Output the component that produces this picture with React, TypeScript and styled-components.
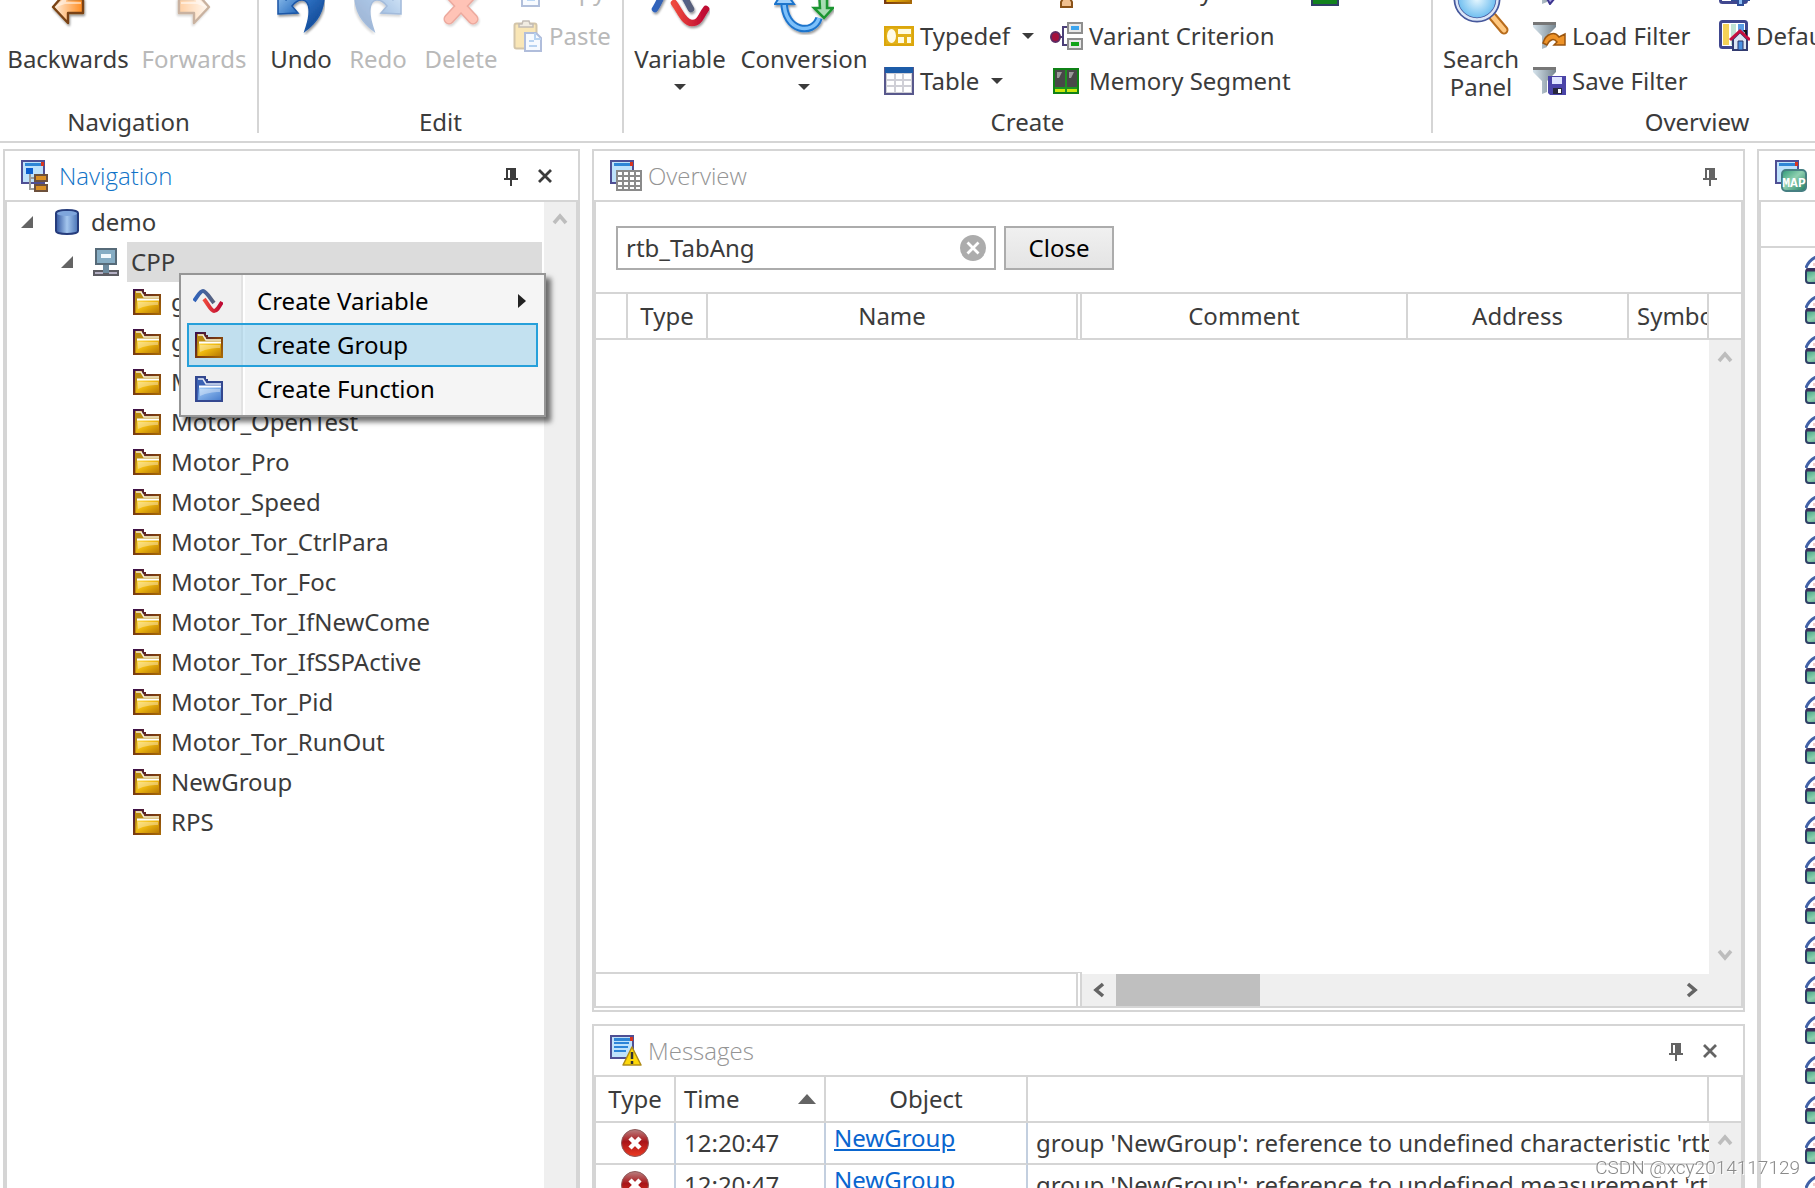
import React from "react";
import styled, { createGlobalStyle, css } from "styled-components";

const line = "#d5d5d5";
const ink = "#3b3b3b";

const GlobalStyle = createGlobalStyle`
  * { box-sizing: border-box; }
  html, body { margin: 0; height: 100%; overflow: hidden; background: #fff; }
  body, button, input, table {
    font-family: "Noto Sans", "Open Sans", sans-serif;
    font-size: 24px;
    line-height: 28px;
    color: ${ink};
  }
  button { border: 0; padding: 0; background: none; cursor: pointer; }
  svg { display: block; flex: none; }
`;

const Screen = styled.div`
  height: 100vh;
  display: flex;
  flex-direction: column;
  overflow: hidden;
`;

/* ---------- ribbon ---------- */

const Ribbon = styled.header`
  flex: none;
  height: 143px;
  display: flex;
  align-items: flex-start;
  overflow: hidden;
  border-bottom: 2px solid ${line};
`;

const Group = styled.section<{ $width: number }>`
  flex: none;
  width: ${(p) => p.$width}px;
  height: 133px;
  display: flex;
  flex-direction: column;
  justify-content: flex-end;
  border-right: 2px solid ${line};
`;

const Actions = styled.div`
  display: flex;
  align-items: flex-end;
  padding-left: 4px;
  margin-bottom: 8px;
`;

const GroupLabel = styled.h2`
  margin: 0;
  font-size: 24px;
  font-weight: 400;
  line-height: 22px;
  text-align: center;
`;

const BigButton = styled.button<{ $width: number }>`
  width: ${(p) => p.$width}px;
  height: 116px;
  display: flex;
  flex-direction: column;
  align-items: center;
  gap: 10px;
  flex: none;
  white-space: nowrap;
  &:disabled { color: #b9b9b9; cursor: default; }
  &:disabled svg { opacity: 0.4; }
`;

const BigText = styled.span`
  display: flex;
  flex-direction: column;
  align-items: center;
  gap: 11px;
`;

const Stack = styled.div<{ $width: number; $spaced?: boolean }>`
  width: ${(p) => p.$width}px;
  padding-left: ${(p) => (p.$spaced ? 8 : 0)}px;
  flex: none;
  display: flex;
  flex-direction: column;
  align-self: flex-end;
`;

const SmallButton = styled.button`
  height: 45px;
  display: flex;
  align-items: center;
  gap: 6px;
  white-space: nowrap;
  &:disabled { color: #b9b9b9; cursor: default; }
  &:disabled svg { opacity: 0.4; }
`;

const Blank = styled.div`
  height: 45px;
`;

const Caret = styled.span`
  width: 0;
  height: 0;
  margin-left: 6px;
  border: 6px solid transparent;
  border-top-color: currentColor;
  border-bottom: 0;
`;

const CenterCaret = styled(Caret)`
  margin-left: 0;
`;

/* ---------- panels ---------- */

const Workspace = styled.main`
  flex: 1;
  min-height: 0;
  display: grid;
  grid-template-columns: 577px minmax(0, 1fr) 58px;
  column-gap: 12px;
  padding: 6px 0 0 3px;
`;

const Middle = styled.div`
  min-height: 0;
  display: flex;
  flex-direction: column;
  gap: 12px;
`;

const Panel = styled.section<{ $closed?: boolean; $height?: number; $bleed?: boolean }>`
  flex: ${(p) => (p.$height ? `0 0 ${p.$height}px` : "1 1 0")};
  min-width: 0;
  min-height: 0;
  display: flex;
  flex-direction: column;
  border: 2px solid ${line};
  ${(p) => p.$closed ? css`padding-bottom: 2px;` : css`border-bottom: 0;`}
  ${(p) => p.$bleed && css`border-right: 0;`}
`;

const PanelHead = styled.header`
  flex: none;
  height: 49px;
  display: flex;
  align-items: center;
  gap: 6px;
  padding: 0 26px 0 16px;
`;

const PanelTitle = styled.h2<{ $active?: boolean }>`
  flex: 1;
  margin: 0;
  font-family: "Open Sans", "Noto Sans", sans-serif;
  font-size: 24px;
  font-weight: 300;
  color: ${(p) => (p.$active ? "#1173c7" : "#949494")};
`;

const Tools = styled.div<{ $active?: boolean }>`
  display: flex;
  gap: 20px;
  padding-top: 2px;
  button { color: ${(p) => (p.$active ? ink : "#646464")}; }
`;

const PanelBody = styled.div<{ $closed?: boolean; $bleed?: boolean }>`
  flex: 1;
  min-height: 0;
  display: flex;
  flex-direction: column;
  overflow: hidden;
  border: 2px solid ${line};
  ${(p) => !p.$closed && css`border-bottom: 0;`}
  ${(p) => p.$bleed && css`border-right: 0;`}
`;

const Split = styled.div`
  flex: 1;
  min-height: 0;
  display: flex;
`;

const ScrollTrack = styled.div<{ $corner?: boolean }>`
  flex: none;
  width: 32px;
  display: flex;
  flex-direction: column;
  align-items: center;
  justify-content: space-between;
  padding: 9px 0 ${(p) => (p.$corner ? 43 : 0)}px;
  background: #efefef;
  color: #bdbdbd;
`;

/* ---------- tree ---------- */

const TreeArea = styled.div`
  position: relative;
  flex: 1;
  min-width: 0;
`;

const Tree = styled.ul`
  margin: 0;
  padding: 0 2px 0 0;
  list-style: none;
`;

const TreeRow = styled.li<{ $level: number }>`
  height: 40px;
  display: flex;
  align-items: center;
  padding-left: ${(p) => 14 + p.$level * 40}px;
`;

const Twisty = styled.span`
  width: 32px;
  flex: none;
  color: #646464;
`;

const TreeIcon = styled.span`
  width: 34px;
  flex: none;
`;

const TreeLabel = styled.span<{ $selected?: boolean }>`
  flex: 1;
  height: 40px;
  padding-left: 4px;
  line-height: 40px;
  background: ${(p) => (p.$selected ? "#dcdcdc" : "transparent")};
`;

const Menu = styled.div`
  position: absolute;
  top: 71px;
  left: 172px;
  width: 367px;
  z-index: 2;
  padding: 4px 6px;
  border: 2px solid #969696;
  background: linear-gradient(90deg, #f0f0f0 60px, #e2e2e2 60px, #e2e2e2 62px, #fff 62px, #fff 64px, #f5f5f5 64px);
  box-shadow: 5px 5px 5px rgba(0, 0, 0, 0.55);
`;

const MenuItem = styled.button<{ $hot?: boolean }>`
  width: 100%;
  height: 44px;
  display: flex;
  align-items: center;
  padding: 0 10px 0 4px;
  border: 2px solid ${(p) => (p.$hot ? "#26a0da" : "transparent")};
  background: ${(p) => (p.$hot ? "rgba(150, 208, 235, 0.52)" : "transparent")};
  color: #000;
  text-align: left;
`;

const MenuIcon = styled.span`
  width: 30px;
  margin-right: 34px;
  flex: none;
  display: flex;
  justify-content: flex-end;
`;

const MenuText = styled.span`
  flex: 1;
`;

/* ---------- overview ---------- */

const SearchBar = styled.form`
  flex: none;
  height: 90px;
  display: flex;
  align-items: center;
  gap: 8px;
  padding: 2px 20px 0;
`;

const SearchField = styled.label`
  width: 380px;
  height: 44px;
  display: flex;
  align-items: center;
  padding: 0 8px;
  border: 2px solid #acacac;
`;

const SearchInput = styled.input`
  flex: 1;
  min-width: 0;
  height: 34px;
  padding: 0 0 2px;
  border: 0;
  outline: 0;
  background: none;
`;

const CloseButton = styled.button`
  width: 110px;
  height: 44px;
  border: 2px solid #acacac;
  background: linear-gradient(#f0f0f0, #e4e4e4);
  color: #000;
`;

const Grid = styled.table<{ $ruled?: boolean }>`
  width: 100%;
  flex: none;
  table-layout: fixed;
  border-collapse: separate;
  border-spacing: 0;
  border-top: ${(p) => (p.$ruled ? `2px solid ${line}` : "0")};
`;

const BodyGrid = styled(Grid)`
  flex: 1;
  min-width: 0;
  align-self: flex-start;
`;

const Col = styled.col<{ $width?: number }>`
  width: ${(p) => (p.$width ? `${p.$width}px` : "auto")};
`;

const Th = styled.th<{ $align?: string; $double?: boolean }>`
  height: 46px;
  padding: 0 8px;
  overflow: hidden;
  white-space: nowrap;
  font-weight: 400;
  text-align: ${(p) => p.$align || "center"};
  border-right: 2px solid ${line};
  border-bottom: 2px solid ${line};
  ${(p) => p.$double && css`border-right: 6px double ${line};`}
  &:last-child { border-right: 0; }
`;

const SortHead = styled.span`
  display: flex;
  align-items: center;
  justify-content: space-between;
`;

const SortMark = styled.span`
  border: 9px solid transparent;
  border-top: 0;
  border-bottom: 10px solid #646464;
`;

const OverviewMain = styled.div`
  flex: 1;
  min-width: 0;
  display: flex;
  flex-direction: column;
  justify-content: flex-end;
`;

const BottomBar = styled.div`
  display: flex;
  height: 34px;
`;

const FrozenFoot = styled.div`
  width: 486px;
  flex: none;
  border-top: 2px solid ${line};
  border-right: 6px double ${line};
`;

const HScroll = styled.div`
  flex: 1;
  margin-top: 2px;
  display: flex;
  align-items: center;
  background: #efefef;
  color: #646464;
`;

const HScrollEnd = styled.span`
  width: 34px;
  display: flex;
  justify-content: center;
`;

const Thumb = styled.span`
  width: 144px;
  height: 32px;
  margin-right: auto;
  background: #bfbfbf;
`;

/* ---------- messages ---------- */

const Td = styled.td<{ $top?: boolean }>`
  height: 42px;
  padding: ${(p) => (p.$top ? "0 8px 10px" : "0 8px")};
  overflow: hidden;
  white-space: nowrap;
  border-right: 2px solid #c3cfdf;
  border-bottom: 2px solid ${line};
  &:last-child { border-right: 0; }
`;

const Centered = styled.span`
  display: flex;
  justify-content: center;
`;

const ObjectLink = styled.a`
  color: #0a66cf;
  text-decoration-thickness: 2px;
  text-underline-offset: 2px;
`;

/* ---------- map list ---------- */

const MapHead = styled.div`
  flex: none;
  height: 46px;
  border-bottom: 2px solid ${line};
`;

const MapList = styled.ul`
  margin: 0;
  padding: 2px 0 0 44px;
  list-style: none;
`;

const MapRow = styled.li`
  height: 40px;
  display: flex;
  align-items: center;
`;

const Watermark = styled.div`
  position: fixed;
  right: 15px;
  bottom: 6px;
  z-index: 3;
  font-family: Roboto, sans-serif;
  font-weight: 300;
  font-size: 19px;
  line-height: 28px;
  color: #8a8a8a;
  text-shadow: 1px 1px 0 #fff;
`;

/* ---------- drawings ---------- */

const DefsSvg = styled.svg`
  position: absolute;
`;

const Defs = () => (
  <DefsSvg width="0" height="0" aria-hidden="true">
    <defs>
      <linearGradient id="gold" x1="0" y1="0" x2="1" y2="1"><stop offset="0" stopColor="#ffdc55" /><stop offset=".45" stopColor="#efb90f" /><stop offset="1" stopColor="#b87a05" /></linearGradient>
      <linearGradient id="goldEdge" x1="0" y1="0" x2="1" y2="1"><stop offset="0" stopColor="#3b0f4a" /><stop offset=".5" stopColor="#7a3b10" /><stop offset="1" stopColor="#a86a08" /></linearGradient>
      <linearGradient id="azure" x1="0" y1="0" x2="1" y2="1"><stop offset="0" stopColor="#a9d2fb" /><stop offset="1" stopColor="#4a7fce" /></linearGradient>
      <linearGradient id="orange" x1="0" y1="0" x2="1" y2="0"><stop offset="0" stopColor="#fff1e2" /><stop offset="1" stopColor="#ff8a1c" /></linearGradient>
      <linearGradient id="undo" x1="0" y1="0" x2="1" y2="1"><stop offset="0" stopColor="#a8d4f8" /><stop offset=".5" stopColor="#2c6fc0" /><stop offset="1" stopColor="#083a86" /></linearGradient>
      <linearGradient id="cyl" x1="0" y1="0" x2="1" y2="0"><stop offset="0" stopColor="#2f549f" /><stop offset=".5" stopColor="#a4c6ee" /><stop offset="1" stopColor="#4973b6" /></linearGradient>
      <linearGradient id="steel" x1="0" y1="0" x2="1" y2="0"><stop offset="0" stopColor="#d5e3ec" /><stop offset="1" stopColor="#76858f" /></linearGradient>
      <linearGradient id="blueWave" x1="0" y1="0" x2="1" y2="0"><stop offset="0" stopColor="#2f63bd" /><stop offset="1" stopColor="#59617c" /></linearGradient>
      <linearGradient id="redWave" x1="0" y1="0" x2="1" y2="0"><stop offset="0" stopColor="#ee4a3c" /><stop offset="1" stopColor="#bd0733" /></linearGradient>
      <linearGradient id="err" x1="0" y1="0" x2="0" y2="1"><stop offset="0" stopColor="#b98080" /><stop offset=".45" stopColor="#a91418" /><stop offset="1" stopColor="#ec3a22" /></linearGradient>
      <radialGradient id="lens"><stop offset="0" stopColor="#e8f8ff" /><stop offset="1" stopColor="#62b8ee" /></radialGradient>
      <linearGradient id="green" x1="0" y1="0" x2="1" y2="1"><stop offset="0" stopColor="#2f9a78" /><stop offset=".45" stopColor="#8fd0b0" /><stop offset="1" stopColor="#1f7a60" /></linearGradient>
      <filter id="drop" x="-20%" y="-20%" width="150%" height="150%"><feDropShadow dx="1" dy="2" stdDeviation="1.2" floodOpacity=".4" /></filter>
    </defs>
  </DefsSvg>
);

const ArrowIcon = ({ flip }: { flip?: boolean }) => (
  <svg width="48" height="48" viewBox="0 0 48 48">
    <g transform={flip ? "matrix(-1 0 0 1 48 0)" : undefined} filter="url(#drop)">
      <path d="M9 20 24 3v9h15v14H24v10z" fill="url(#orange)" stroke="#7a4312" strokeWidth="2.4" strokeLinejoin="round" />
      <path d="M12 20 22 9v6h15v2H21z" fill="#fff" opacity=".5" />
    </g>
  </svg>
);

const UndoIcon = ({ flip }: { flip?: boolean }) => (
  <svg width="48" height="48" viewBox="0 0 48 48">
    <g transform={flip ? "matrix(-1 0 0 1 48 0)" : undefined} filter="url(#drop)">
      <path d="M1 7v20l20-1-6-7c7-9 16-8 17 3 1 9-2 15-4 22C39 36 47 24 47 9 44-6 22-8 9 13z" fill="url(#undo)" stroke="#1a56a6" strokeWidth="1.5" />
    </g>
  </svg>
);

const DeleteIcon = () => (
  <svg width="48" height="48" viewBox="0 0 48 48">
    <path d="M10 4 36 32M38 4 12 32" stroke="#d02a10" strokeWidth="11" strokeLinecap="round" filter="url(#drop)" />
    <path d="M10 4 36 32M38 4 12 32" stroke="#ff6a4a" strokeWidth="8" strokeLinecap="round" />
  </svg>
);

const WaveIcon = () => (
  <svg width="30" height="26" viewBox="0 0 30 26" fill="none" strokeWidth="4">
    <path d="M1 13C5 8 7 3 10 3S17 10 21 15" stroke="url(#blueWave)" />
    <path d="M11 11C15 16 18 23 21 23S26 19 29 14" stroke="url(#redWave)" />
  </svg>
);

const BigWaveIcon = () => (
  <svg width="60" height="48" viewBox="0 0 60 48" fill="none" strokeWidth="6.500" strokeLinecap="round">
    <g filter="url(#drop)">
      <path d="M5 22C12 12 14-2 22-2S34 10 41 22" stroke="url(#blueWave)" />
      <path d="M24 16C30 24 34 36 42 36S50 30 56 22" stroke="url(#redWave)" />
    </g>
  </svg>
);

const ConvertIcon = () => (
  <svg width="60" height="48" viewBox="0 0 60 48" fill="none">
    <g filter="url(#drop)">
      <path d="M10 14C10 46 40 48 45 31" stroke="#1f74cc" strokeWidth="7.500" />
      <path d="M10 14C10 46 40 48 45 31" stroke="#7cc0fa" strokeWidth="3.500" />
      <path d="M1 17 10 3l10 14z" fill="#9fd0fb" stroke="#1f74cc" strokeWidth="2" />
      <path d="M45 4h8v17h6L50 31 40 21h6z" fill="#a8dcb4" stroke="#1f9632" strokeWidth="2.500" />
    </g>
  </svg>
);

const SearchIcon = () => (
  <svg width="58" height="48" viewBox="0 0 58 48">
    <path d="m41 30 11 13" stroke="#b86c1c" strokeWidth="9" strokeLinecap="round" />
    <path d="m41 30 11 13" stroke="#ffc880" strokeWidth="5" strokeLinecap="round" />
    <circle cx="25" cy="12" r="21" fill="url(#lens)" stroke="#46589c" strokeWidth="5" />
    <circle cx="25" cy="12" r="20.500" fill="none" stroke="#dbe6f8" strokeWidth="2.500" />
  </svg>
);

const CopyIcon = () => (
  <svg width="30" height="34" viewBox="0 0 30 34">
    <path d="M3 1h14v20H3z" fill="#e4eefb" stroke="#3f62a8" strokeWidth="2" />
    <path d="M9 11h12l5 5v16H9z" fill="#eef6ff" stroke="#3f62a8" strokeWidth="2" />
    <path d="M14 20h8M14 26h8" stroke="#5aa0e8" strokeWidth="2" />
  </svg>
);

const PasteIcon = () => (
  <svg width="30" height="32" viewBox="0 0 30 32">
    <rect x="1.500" y="3.500" width="22" height="25" rx="2" fill="#f2c24a" stroke="#93702a" strokeWidth="2" />
    <path d="M6 7V4h3l1-3h6l1 3h3v3z" fill="#ddd0b8" stroke="#6b5a4a" strokeWidth="1.500" />
    <path d="M12 13h11l5 5v13H12z" fill="#eaf4ff" stroke="#3d5ba6" strokeWidth="2" />
    <path d="M22 13v6h6M16 21h5M16 26h8" fill="none" stroke="#4f93dd" strokeWidth="2" />
  </svg>
);

const FolderIcon = ({ blue }: { blue?: boolean }) => (
  <svg width="28" height="26" viewBox="0 0 28 26">
    <path d="M1 25V1h9v3h2v2h15v19z" fill={blue ? "#3a62b4" : "#b98a10"} stroke={blue ? "#33478f" : "url(#goldEdge)"} strokeWidth="2" />
    <path d="M3 3h5l3 5h15" fill="none" stroke="#fff" strokeWidth="1.500" opacity=".85" />
    <path d="M4 11h22v13H3z" fill={blue ? "url(#azure)" : "url(#gold)"} />
    <path d="M4 10.500h22" stroke="#fff" strokeWidth="2" />
    <path d="M5 13h20v3C17 16 12 17 5 20z" fill="#fff" opacity=".35" />
  </svg>
);

const TypedefIcon = () => (
  <svg width="30" height="22" viewBox="0 0 30 22">
    <rect x="1" y="2" width="28" height="18" fill="#e2b118" stroke="#dba60c" strokeWidth="2" />
    <ellipse cx="7.500" cy="11" rx="4.500" ry="7" fill="#fffbe6" />
    <path d="M14 4h13v5H14zM14 12h6v6h-6zM23 12h4v6h-4z" fill="#fffbe0" />
  </svg>
);

const TableIcon = () => (
  <svg width="30" height="28" viewBox="0 0 30 28">
    <rect x="1" y="1" width="28" height="26" fill="#cfcfd6" stroke="#58588c" strokeWidth="2" />
    <path d="M1 0h28v6H1z" fill="#1c5ca8" />
    <path d="M3 7h7v5H3zM12 7h6v5h-6zM20 7h7v5h-7zM3 14h7v4H3zM12 14h6v4h-6zM20 14h7v4h-7zM3 20h7v5H3zM12 20h6v5h-6zM20 20h7v5h-7z" fill="#fff" />
  </svg>
);

const VariantIcon = () => (
  <svg width="33" height="28" viewBox="0 0 33 28">
    <path d="M10 15h3M17 5h-4v18h4" fill="none" stroke="#4b3f78" strokeWidth="2" />
    <ellipse cx="5.500" cy="15" rx="4.500" ry="5" fill="#a40f3c" stroke="#5d2a62" strokeWidth="2" />
    <rect x="18" y="1" width="14" height="10" fill="#e8e8e8" stroke="#8e8e8e" strokeWidth="2" />
    <rect x="21" y="4" width="8" height="4" fill="#3ca4ee" />
    <rect x="18" y="17" width="14" height="10" fill="#e8e8e8" stroke="#8e8e8e" strokeWidth="2" />
    <rect x="21" y="20" width="8" height="4" fill="#11a318" />
  </svg>
);

const MemoryIcon = () => (
  <svg width="33" height="26" viewBox="0 0 33 26">
    <path d="M4 1h24v24H4z" fill="#1d9420" stroke="#0f8216" strokeWidth="2" />
    <path d="M5 2h10v17H5zM17 2h10v17H17z" fill="#484848" />
    <path d="M7 4h5l-3 6H7zM19 4h5l-3 6h-2z" fill="#999" />
    <path d="M5 21h10v3H5zM17 21h10v3H17z" fill="#c8e60c" />
  </svg>
);

const FrameIcon = () => (
  <svg width="28" height="30" viewBox="0 0 28 30">
    <path d="M1 1h26v28H1z" fill="#12821e" stroke="#2f3f66" strokeWidth="2" />
  </svg>
);

const LayoutIcon = () => (
  <svg width="33" height="34" viewBox="0 0 33 34">
    <path d="M12 2h9v10l-3 9 4 7v5H11v-5l4-7-3-9z" fill="#f0c090" stroke="#8a5218" strokeWidth="2" />
  </svg>
);

const FunnelIcon = ({ kind }: { kind: "edit" | "load" | "save" }) => (
  <svg width="33" height="28" viewBox="0 0 33 28">
    <path d="M0 1h23v4l-9 9v11l-5 2V14L0 5z" fill="url(#steel)" />
    <path d="M0 0h23v3H0z" fill="#777" />
    {kind === "load" && <path d="M10 21c3-10 12-12 16-6l6-3v11H21l3-3c-3-4-7-3-10 3z" fill="#ee9328" stroke="#9b5610" strokeWidth="1.500" />}
    {kind === "save" && (
      <>
        <path d="M15 9h18v19H17l-2-2z" fill="#4a44a8" />
        <path d="M19 10h10v7H19z" fill="#dfe4ff" />
        <path d="M20 21h9v6h-9z" fill="#26263c" />
        <path d="M25 22h3v4h-3z" fill="#fff" />
      </>
    )}
    {kind === "edit" && <path d="m13 20 8-9 5 5-9 11z" fill="#a8a0e8" stroke="#3d3690" strokeWidth="2" />}
  </svg>
);

const ColumnsIcon = ({ home }: { home?: boolean }) => (
  <svg width="31" height="31" viewBox="0 0 31 31">
    <rect x="1.500" y="1.500" width="26" height="26" rx="2" fill="#fff" stroke="#40478f" strokeWidth="3" />
    <path d="M4 4h6v21H4z" fill="#f4d258" /><path d="M12 4h5v21h-5z" fill="#c0e2d4" /><path d="M19 4h6v21h-6z" fill="#5a9ce4" />
    {home ? (
      <>
        <path d="M14 19 21 12l7 7v11H14z" fill="#dce6f4" stroke="#333c70" strokeWidth="2" />
        <path d="m11 20 10-9 10 9" fill="none" stroke="#c80f3f" strokeWidth="3" />
        <path d="M19 21h5v9h-5z" fill="#4a90e0" stroke="#2c3568" />
        <path d="M24 10h4v6z" fill="#111" />
      </>
    ) : (
      <path d="M13 20h6v-6h5v6h6v5h-6v5h-5v-5h-6z" fill="#8cc0f4" stroke="#2f4d96" strokeWidth="2" />
    )}
  </svg>
);

const WindowBase = () => (
  <>
    <rect x="1" y="1" width="22" height="22" fill="#bfe2fb" stroke="#4f4f94" strokeWidth="2" />
    <path d="M4 3h16v3H4z" fill="#2f86d6" />
    <path d="M20 2h3v4h-3z" fill="#d8351f" />
  </>
);

const NavPanelIcon = () => (
  <svg width="32" height="32" viewBox="0 0 32 32">
    <WindowBase />
    <path d="M5 8h7v6H5z" fill="#0c5fd0" />
    <path d="M9 14v15h6M9 18h6" fill="none" stroke="#9b9b9b" strokeWidth="2" />
    <rect x="14" y="15" width="12" height="6" fill="#d98f24" stroke="#6d503c" strokeWidth="2" />
    <rect x="14" y="25" width="12" height="6" fill="#d98f24" stroke="#6d503c" strokeWidth="2" />
  </svg>
);

const OverviewPanelIcon = () => (
  <svg width="32" height="32" viewBox="0 0 32 32">
    <WindowBase />
    <path d="M7 11h24v19H7z" fill="#fff" stroke="#8a8a8a" strokeWidth="2" />
    <path d="M13 11v19M19 11v19M25 11v19M7 16h24M7 21h24M7 26h24" stroke="#8a8a8a" strokeWidth="2" />
  </svg>
);

const MessagesPanelIcon = () => (
  <svg width="32" height="32" viewBox="0 0 32 32">
    <WindowBase />
    <path d="M4 8h15M4 12h14M4 16h12" stroke="#2c84d8" strokeWidth="2" />
    <path d="m22 12 9 18H13z" fill="#fdd80a" stroke="#b08c18" strokeWidth="1.500" strokeLinejoin="round" />
    <path d="M22 17v7M22 26v3" stroke="#333" strokeWidth="2.500" />
  </svg>
);

const MapPanelIcon = () => (
  <svg width="32" height="32" viewBox="0 0 32 32">
    <WindowBase />
    <rect x="7" y="10" width="24" height="21" rx="4" fill="url(#green)" stroke="#467f82" strokeWidth="2" />
    <text x="19" y="27" textAnchor="middle" fontFamily="Liberation Mono, monospace" fontWeight="700" fontSize="13" fill="#fff">MAP</text>
  </svg>
);

const DatabaseIcon = () => (
  <svg width="28" height="26" viewBox="0 0 28 26">
    <path d="M3 4c0-4 22-4 22 0v18c0 4-22 4-22 0z" fill="url(#cyl)" stroke="#263c7c" strokeWidth="2" />
    <ellipse cx="14" cy="4.500" rx="10" ry="2.500" fill="#7fa6dc" />
  </svg>
);

const DeviceIcon = () => (
  <svg width="26" height="28" viewBox="0 0 26 28">
    <path d="M0 22h26v6H0z" fill="#5b5b62" /><path d="M2 24h8v2H2zM16 24h8v2h-8z" fill="#b4b0c4" />
    <path d="M10 16h6v9h-6z" fill="#6d8b9f" />
    <rect x="3" y="1" width="20" height="15" fill="#86adc4" stroke="#566a78" strokeWidth="2" />
    <path d="M8 6h10v4H8z" fill="#f2f9fd" />
  </svg>
);

const PinIcon = () => (
  <svg width="14" height="18" viewBox="0 0 14 18">
    <path d="M2 0h10v10h2v2H8v6H6v-6H0v-2h2zM4 2v8h2V2z" fill="currentColor" fillRule="evenodd" />
  </svg>
);

const CrossIcon = () => (
  <svg width="14" height="18" viewBox="0 0 14 18">
    <path d="m1 2 12 12M13 2 1 14" stroke="currentColor" strokeWidth="2.800" />
  </svg>
);

const ExpandedIcon = () => (
  <svg width="12" height="12" viewBox="0 0 12 12"><path d="M12 0v12H0z" fill="currentColor" /></svg>
);

const Chevron = ({ turn = 0 }: { turn?: number }) => (
  <svg width="16" height="16" viewBox="0 0 16 16">
    <path d="m2 12 6-7 6 7" fill="none" stroke="currentColor" strokeWidth="3.600" transform={`rotate(${turn} 8 8)`} />
  </svg>
);

const ClearIcon = () => (
  <svg width="26" height="26" viewBox="0 0 26 26">
    <circle cx="13" cy="13" r="13" fill="#acacac" />
    <path d="m7.500 7.500 11 11M18.500 7.500l-11 11" stroke="#fff" strokeWidth="2.800" />
  </svg>
);

const ErrorIcon = () => (
  <svg width="28" height="28" viewBox="0 0 28 28">
    <circle cx="14" cy="14" r="13.500" fill="url(#err)" stroke="#8e5a5a" />
    <path d="m9 9 10 10M19 9 9 19" stroke="#fff" strokeWidth="4.500" />
  </svg>
);

const MapItemIcon = () => (
  <svg width="30" height="28" viewBox="0 0 30 28">
    <path d="M1 12C2 8 6 3 11 1" fill="none" stroke="#4262a8" strokeWidth="3" />
    <path d="M8 10V7h3v3z" fill="#f6cfcf" />
    <rect x="1" y="13" width="27" height="14" rx="3" fill="url(#green)" stroke="#2f3f66" strokeWidth="2" />
    <path d="M1 14h27" stroke="#3b2f5c" strokeWidth="3" />
  </svg>
);

/* ---------- screen ---------- */

const groups = [
  "g", "g", "M", "Motor_OpenTest", "Motor_Pro", "Motor_Speed", "Motor_Tor_CtrlPara", "Motor_Tor_Foc",
  "Motor_Tor_IfNewCome", "Motor_Tor_IfSSPActive", "Motor_Tor_Pid", "Motor_Tor_RunOut", "NewGroup", "RPS",
];

const messages = [
  { time: "12:20:47", object: "NewGroup", text: "group 'NewGroup': reference to undefined characteristic 'rtb_TabAng'" },
  { time: "12:20:47", object: "NewGroup", text: "group 'NewGroup': reference to undefined measurement 'rtb_TabAng'" },
];

const mapRows = Array.from({ length: 24 }, (_, i) => i);

export default function App() {
  return (
    <Screen>
      <GlobalStyle />
      <Defs />
      <Ribbon>
        <Group $width={259}>
          <Actions>
            <BigButton $width={128}><ArrowIcon />Backwards</BigButton>
            <BigButton $width={124} disabled><ArrowIcon flip />Forwards</BigButton>
          </Actions>
          <GroupLabel>Navigation</GroupLabel>
        </Group>
        <Group $width={365}>
          <Actions>
            <BigButton $width={76}><UndoIcon />Undo</BigButton>
            <BigButton $width={78} disabled><UndoIcon flip />Redo</BigButton>
            <BigButton $width={88} disabled><DeleteIcon />Delete</BigButton>
            <Stack $width={110} $spaced>
              <SmallButton disabled><CopyIcon />Copy</SmallButton>
              <SmallButton disabled><PasteIcon />Paste</SmallButton>
              <Blank />
            </Stack>
          </Actions>
          <GroupLabel>Edit</GroupLabel>
        </Group>
        <Group $width={809}>
          <Actions>
            <BigButton $width={104}><BigWaveIcon /><BigText>Variable<CenterCaret /></BigText></BigButton>
            <BigButton $width={144}><ConvertIcon /><BigText>Conversion<CenterCaret /></BigText></BigButton>
            <Stack $width={174} $spaced>
              <SmallButton><FolderIcon />Folder</SmallButton>
              <SmallButton><TypedefIcon />Typedef<Caret /></SmallButton>
              <SmallButton><TableIcon />Table<Caret /></SmallButton>
            </Stack>
            <Stack $width={261}>
              <SmallButton><LayoutIcon />Record Layout</SmallButton>
              <SmallButton><VariantIcon />Variant Criterion</SmallButton>
              <SmallButton><MemoryIcon />Memory Segment</SmallButton>
            </Stack>
            <Stack $width={110}>
              <SmallButton><FrameIcon />Frame</SmallButton>
              <Blank />
              <Blank />
            </Stack>
          </Actions>
          <GroupLabel>Create</GroupLabel>
        </Group>
        <Group $width={530}>
          <Actions>
            <BigButton $width={88}><SearchIcon /><span>Search<br />Panel</span></BigButton>
            <Stack $width={194} $spaced>
              <SmallButton><FunnelIcon kind="edit" />Filter Editor</SmallButton>
              <SmallButton><FunnelIcon kind="load" />Load Filter</SmallButton>
              <SmallButton><FunnelIcon kind="save" />Save Filter</SmallButton>
            </Stack>
            <Stack $width={200}>
              <SmallButton><ColumnsIcon />Columns</SmallButton>
              <SmallButton><ColumnsIcon home />Default</SmallButton>
              <Blank />
            </Stack>
          </Actions>
          <GroupLabel>Overview</GroupLabel>
        </Group>
      </Ribbon>

      <Workspace>
        <Panel>
          <PanelHead>
            <NavPanelIcon />
            <PanelTitle $active>Navigation</PanelTitle>
            <Tools $active>
              <button aria-label="Pin navigation"><PinIcon /></button>
              <button aria-label="Close navigation"><CrossIcon /></button>
            </Tools>
          </PanelHead>
          <PanelBody>
            <Split>
              <TreeArea>
                <Tree>
                  <TreeRow $level={0}>
                    <Twisty><ExpandedIcon /></Twisty>
                    <TreeIcon><DatabaseIcon /></TreeIcon>
                    <TreeLabel>demo</TreeLabel>
                  </TreeRow>
                  <TreeRow $level={1}>
                    <Twisty><ExpandedIcon /></Twisty>
                    <TreeIcon><DeviceIcon /></TreeIcon>
                    <TreeLabel $selected>CPP</TreeLabel>
                  </TreeRow>
                  {groups.map((name, i) => (
                    <TreeRow key={i} $level={2}>
                      <Twisty />
                      <TreeIcon><FolderIcon /></TreeIcon>
                      <TreeLabel>{name}</TreeLabel>
                    </TreeRow>
                  ))}
                </Tree>
                <Menu role="menu">
                  <MenuItem role="menuitem">
                    <MenuIcon><WaveIcon /></MenuIcon>
                    <MenuText>Create Variable</MenuText>
                    <svg width="8" height="14" viewBox="0 0 8 14"><path d="m0 0 8 7-8 7z" fill="#222" /></svg>
                  </MenuItem>
                  <MenuItem role="menuitem" $hot>
                    <MenuIcon><FolderIcon /></MenuIcon>
                    <MenuText>Create Group</MenuText>
                  </MenuItem>
                  <MenuItem role="menuitem">
                    <MenuIcon><FolderIcon blue /></MenuIcon>
                    <MenuText>Create Function</MenuText>
                  </MenuItem>
                </Menu>
              </TreeArea>
              <ScrollTrack><Chevron /></ScrollTrack>
            </Split>
          </PanelBody>
        </Panel>

        <Middle>
          <Panel $closed>
            <PanelHead>
              <OverviewPanelIcon />
              <PanelTitle>Overview</PanelTitle>
              <Tools><button aria-label="Pin overview"><PinIcon /></button></Tools>
            </PanelHead>
            <PanelBody $closed>
              <SearchBar onSubmit={(e) => e.preventDefault()}>
                <SearchField>
                  <SearchInput aria-label="Search" defaultValue="rtb_TabAng" />
                  <button type="button" aria-label="Clear search"><ClearIcon /></button>
                </SearchField>
                <CloseButton type="button">Close</CloseButton>
              </SearchBar>
              <Grid $ruled>
                <colgroup>
                  <Col $width={32} /><Col $width={80} /><Col $width={374} />
                  <Col /><Col $width={221} /><Col $width={80} /><Col $width={32} />
                </colgroup>
                <thead>
                  <tr>
                    <Th /><Th>Type</Th><Th $double>Name</Th><Th>Comment</Th><Th>Address</Th><Th $align="left">Symbol</Th><Th />
                  </tr>
                </thead>
              </Grid>
              <Split>
                <OverviewMain>
                  <BottomBar>
                    <FrozenFoot />
                    <HScroll>
                      <HScrollEnd><Chevron turn={-90} /></HScrollEnd>
                      <Thumb />
                      <HScrollEnd><Chevron turn={90} /></HScrollEnd>
                    </HScroll>
                  </BottomBar>
                </OverviewMain>
                <ScrollTrack $corner><Chevron /><Chevron turn={180} /></ScrollTrack>
              </Split>
            </PanelBody>
          </Panel>

          <Panel $height={164}>
            <PanelHead>
              <MessagesPanelIcon />
              <PanelTitle>Messages</PanelTitle>
              <Tools>
                <button aria-label="Pin messages"><PinIcon /></button>
                <button aria-label="Close messages"><CrossIcon /></button>
              </Tools>
            </PanelHead>
            <PanelBody>
              <Grid>
                <colgroup>
                  <Col $width={80} /><Col $width={150} /><Col $width={202} /><Col /><Col $width={32} />
                </colgroup>
                <thead>
                  <tr>
                    <Th>Type</Th>
                    <Th $align="left"><SortHead>Time<SortMark /></SortHead></Th>
                    <Th>Object</Th><Th /><Th />
                  </tr>
                </thead>
              </Grid>
              <Split>
                <BodyGrid>
                  <colgroup>
                    <Col $width={80} /><Col $width={150} /><Col $width={202} /><Col />
                  </colgroup>
                  <tbody>
                    {messages.map((m, i) => (
                      <tr key={i}>
                        <Td><Centered><ErrorIcon /></Centered></Td>
                        <Td>{m.time}</Td>
                        <Td $top><ObjectLink href="#newgroup">{m.object}</ObjectLink></Td>
                        <Td>{m.text}</Td>
                      </tr>
                    ))}
                  </tbody>
                </BodyGrid>
                <ScrollTrack><Chevron /></ScrollTrack>
              </Split>
            </PanelBody>
          </Panel>
        </Middle>

        <Panel $bleed>
          <PanelHead><MapPanelIcon /></PanelHead>
          <PanelBody $bleed>
            <MapHead />
            <MapList>
              {mapRows.map((i) => <MapRow key={i}><MapItemIcon /></MapRow>)}
            </MapList>
          </PanelBody>
        </Panel>
      </Workspace>
      <Watermark>CSDN @xcy2014117129</Watermark>
    </Screen>
  );
}
